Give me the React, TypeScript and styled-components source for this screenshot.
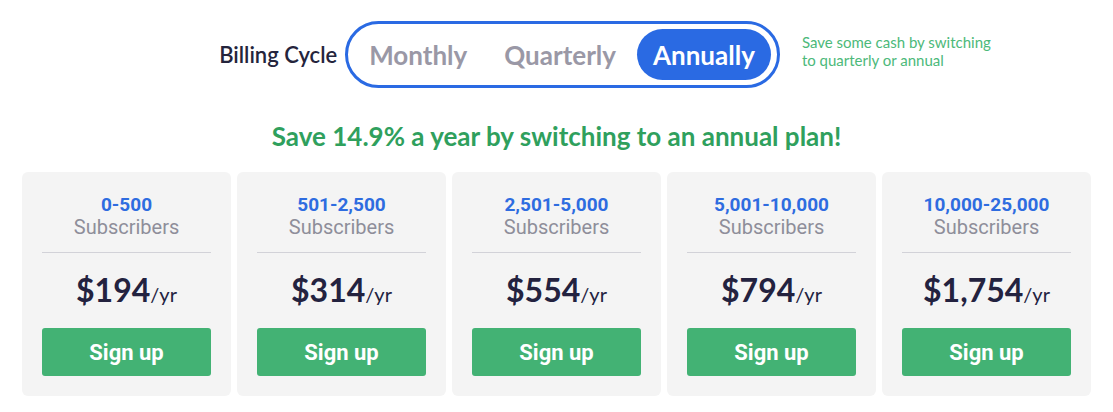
import { useState } from "react";
import styled, { createGlobalStyle } from "styled-components";

const GlobalStyle = createGlobalStyle`
  body {
    margin: 0;
    background: #ffffff;
    font-family: Lato, "Open Sans", sans-serif;
  }
`;

const Page = styled.div`
  width: 1113px;
  height: 412px;
  overflow: hidden;
`;

const CycleRow = styled.div`
  display: flex;
  align-items: center;
  justify-content: center;
  padding: 21px 0 0 112px;
  gap: 8px;
`;

const CycleLabel = styled.span`
  font-size: 22px;
  font-weight: 600;
  color: #24243c;
`;

const Toggle = styled.div`
  display: flex;
  align-items: center;
  gap: 5px;
  padding: 5px 6px 5px 5px;
  border: 3px solid #2a6ae3;
  border-radius: 40px;
`;

const Option = styled.button<{ $active: boolean }>`
  height: 51px;
  padding: 0 16px;
  border: none;
  border-radius: 26px;
  background: ${(p) => (p.$active ? "#2a6ae3" : "transparent")};
  color: ${(p) => (p.$active ? "#ffffff" : "#9a98a6")};
  font-family: Lato, sans-serif;
  font-size: 26px;
  font-weight: 700;
  cursor: pointer;
`;

const Note = styled.p`
  margin: 0 0 8px 14px;
  width: 204px;
  font-size: 15px;
  line-height: 18px;
  color: #4cb97a;
`;

const Headline = styled.h2`
  margin: 32px 0 0;
  text-align: center;
  font-size: 26px;
  font-weight: 700;
  color: #2fa05d;
`;

const Cards = styled.div`
  display: flex;
  justify-content: center;
  gap: 6px;
  margin-top: 20px;
`;

const Card = styled.div`
  width: 209px;
  box-sizing: border-box;
  padding: 22px 20px 20px;
  background: #f4f4f4;
  border-radius: 6px;
  display: flex;
  flex-direction: column;
  align-items: stretch;
  text-align: center;
`;

const Range = styled.div`
  font-family: Roboto, sans-serif;
  font-size: 19px;
  font-weight: 700;
  line-height: 22px;
  color: #2e6ce0;
`;

const Unit = styled.div`
  font-family: Roboto, sans-serif;
  font-size: 20px;
  line-height: 22px;
  color: #8e8e9a;
`;

const Divider = styled.hr`
  margin: 14px 0 0;
  border: none;
  border-top: 1px solid #d2d2d8;
`;

const Price = styled.div`
  margin-top: 13px;
  height: 48px;
  line-height: 48px;
  font-size: 32px;
  font-weight: 700;
  color: #23223f;
`;

const Per = styled.span`
  font-size: 20px;
  font-weight: 400;
`;

const SignUp = styled.button`
  margin-top: 14px;
  height: 48px;
  border: none;
  border-radius: 3px;
  background: #43b274;
  color: #ffffff;
  font-family: Roboto, sans-serif;
  font-size: 22px;
  font-weight: 700;
  cursor: pointer;
`;

const cycles = ["Monthly", "Quarterly", "Annually"];

const plans = [
  { range: "0-500", price: "$194" },
  { range: "501-2,500", price: "$314" },
  { range: "2,501-5,000", price: "$554" },
  { range: "5,001-10,000", price: "$794" },
  { range: "10,000-25,000", price: "$1,754" },
];

export default function App() {
  const [cycle, setCycle] = useState("Annually");

  return (
    <Page>
      <GlobalStyle />
      <CycleRow>
        <CycleLabel>Billing Cycle</CycleLabel>
        <Toggle>
          {cycles.map((c) => (
            <Option key={c} $active={c === cycle} onClick={() => setCycle(c)}>
              {c}
            </Option>
          ))}
        </Toggle>
        <Note>Save some cash by switching to quarterly or annual</Note>
      </CycleRow>
      <Headline>Save 14.9% a year by switching to an annual plan!</Headline>
      <Cards>
        {plans.map((plan) => (
          <Card key={plan.range}>
            <Range>{plan.range}</Range>
            <Unit>Subscribers</Unit>
            <Divider />
            <Price>
              {plan.price}
              <Per>/yr</Per>
            </Price>
            <SignUp>Sign up</SignUp>
          </Card>
        ))}
      </Cards>
    </Page>
  );
}
